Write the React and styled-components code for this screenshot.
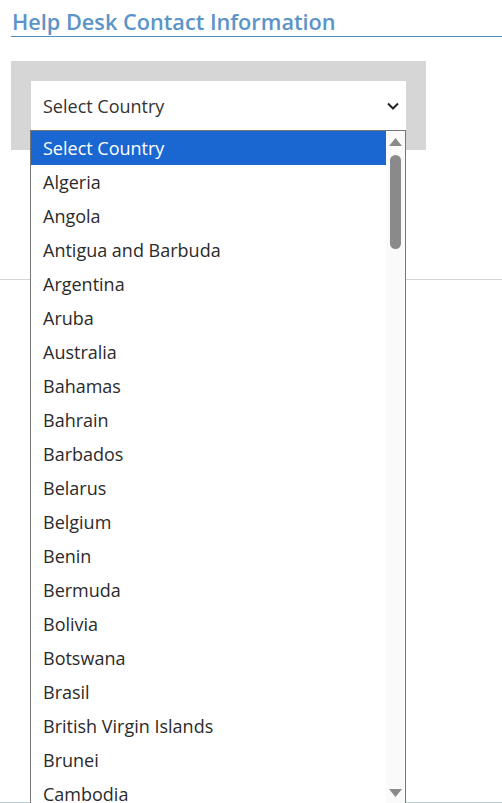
import styled, { createGlobalStyle } from "styled-components"

const GlobalStyle = createGlobalStyle`
    body {
        margin: 0;
        font-family: "Open Sans", "Liberation Sans", sans-serif;
        background: #fff;
    }
`

const countries = [
    'Select Country', 'Algeria', 'Angola', 'Antigua and Barbuda', 'Argentina',
    'Aruba', 'Australia', 'Bahamas', 'Bahrain', 'Barbados', 'Belarus', 'Belgium',
    'Benin', 'Bermuda', 'Bolivia', 'Botswana', 'Brasil', 'British Virgin Islands',
    'Brunei', 'Cambodia',
]

const Page = styled.div`
    width: 502px;
    height: 803px;
    overflow: hidden;
    display: flex;
    flex-direction: column;
`

const Title = styled.h2`
    margin: 0 0 0 11px;
    padding: 8px 0 0 1px;
    font-size: 21.7px;
    line-height: 28px;
    font-weight: 600;
    color: #5b94c9;
    border-bottom: 1px solid #4f8dc6;
`

const Panel = styled.div`
    margin: 24px 0 0 11px;
    width: 375px;
    padding: 20px;
    background: #d6d6d6;
`

const SelectWrap = styled.div`
    position: relative;
`

const SelectBox = styled.div`
    height: 49px;
    background: #fff;
    display: flex;
    align-items: center;
    justify-content: space-between;
    padding: 0 6px 0 12px;
    font-size: 18px;
    color: #333;
`

const Divider = styled.div`
    margin-top: 129px;
    height: 1px;
    background: #d4d4d4;
`

const Footer = styled.div`
    margin-top: auto;
    height: 1px;
    background: #b7cfd0;
`

const List = styled.div`
    position: absolute;
    top: 100%;
    left: -1px;
    width: 374px;
    height: 672px;
    border: 1px solid #767676;
    border-bottom: none;
    background: #fff;
    display: flex;
    z-index: 2;
`

const Options = styled.div`
    flex: 1;
    overflow: hidden;
`

const Option = styled.div`
    height: 34px;
    line-height: 34px;
    padding-left: 12px;
    font-size: 18px;
    color: ${props => props.selected ? '#fff' : '#2b2b2b'};
    background: ${props => props.selected ? '#1a67d2' : 'transparent'};
    white-space: nowrap;
`

const Scrollbar = styled.div`
    width: 19px;
    background: #fafafa;
    display: flex;
    flex-direction: column;
    align-items: center;
    padding-top: 7px;
`

const Thumb = styled.div`
    width: 11px;
    height: 94px;
    margin-top: 8px;
    border-radius: 6px;
    background: #8a8a8a;
`

const Arrow = styled.svg`
    display: block;
    margin-top: ${props => props.down ? 'auto' : '0'};
    margin-bottom: ${props => props.down ? '6px' : '0'};
`

const Chevron = () => (
    <svg width="14" height="10" viewBox="0 0 14 10">
        <path d="M2 2.5 L7 7.5 L12 2.5" fill="none" stroke="#222" strokeWidth="2" />
    </svg>
)

const App = () => {
    return (
        <Page>
            <GlobalStyle />
            <Title>Help Desk Contact Information</Title>
            <Panel>
                <SelectWrap>
                    <SelectBox>
                        Select Country
                        <Chevron />
                    </SelectBox>
                    <List>
                        <Options>
                            {countries.map((name, i) => (
                                <Option key={name} selected={i === 0}>{name}</Option>
                            ))}
                        </Options>
                        <Scrollbar>
                            <Arrow width="13" height="9" viewBox="0 0 13 9">
                                <path d="M6.5 0 L13 8 L0 8 Z" fill="#8a8a8a" />
                            </Arrow>
                            <Thumb />
                            <Arrow down width="13" height="9" viewBox="0 0 13 9">
                                <path d="M0 1 L13 1 L6.5 9 Z" fill="#8a8a8a" />
                            </Arrow>
                        </Scrollbar>
                    </List>
                </SelectWrap>
            </Panel>
            <Divider />
            <Footer />
        </Page>
    )
}

export default App
